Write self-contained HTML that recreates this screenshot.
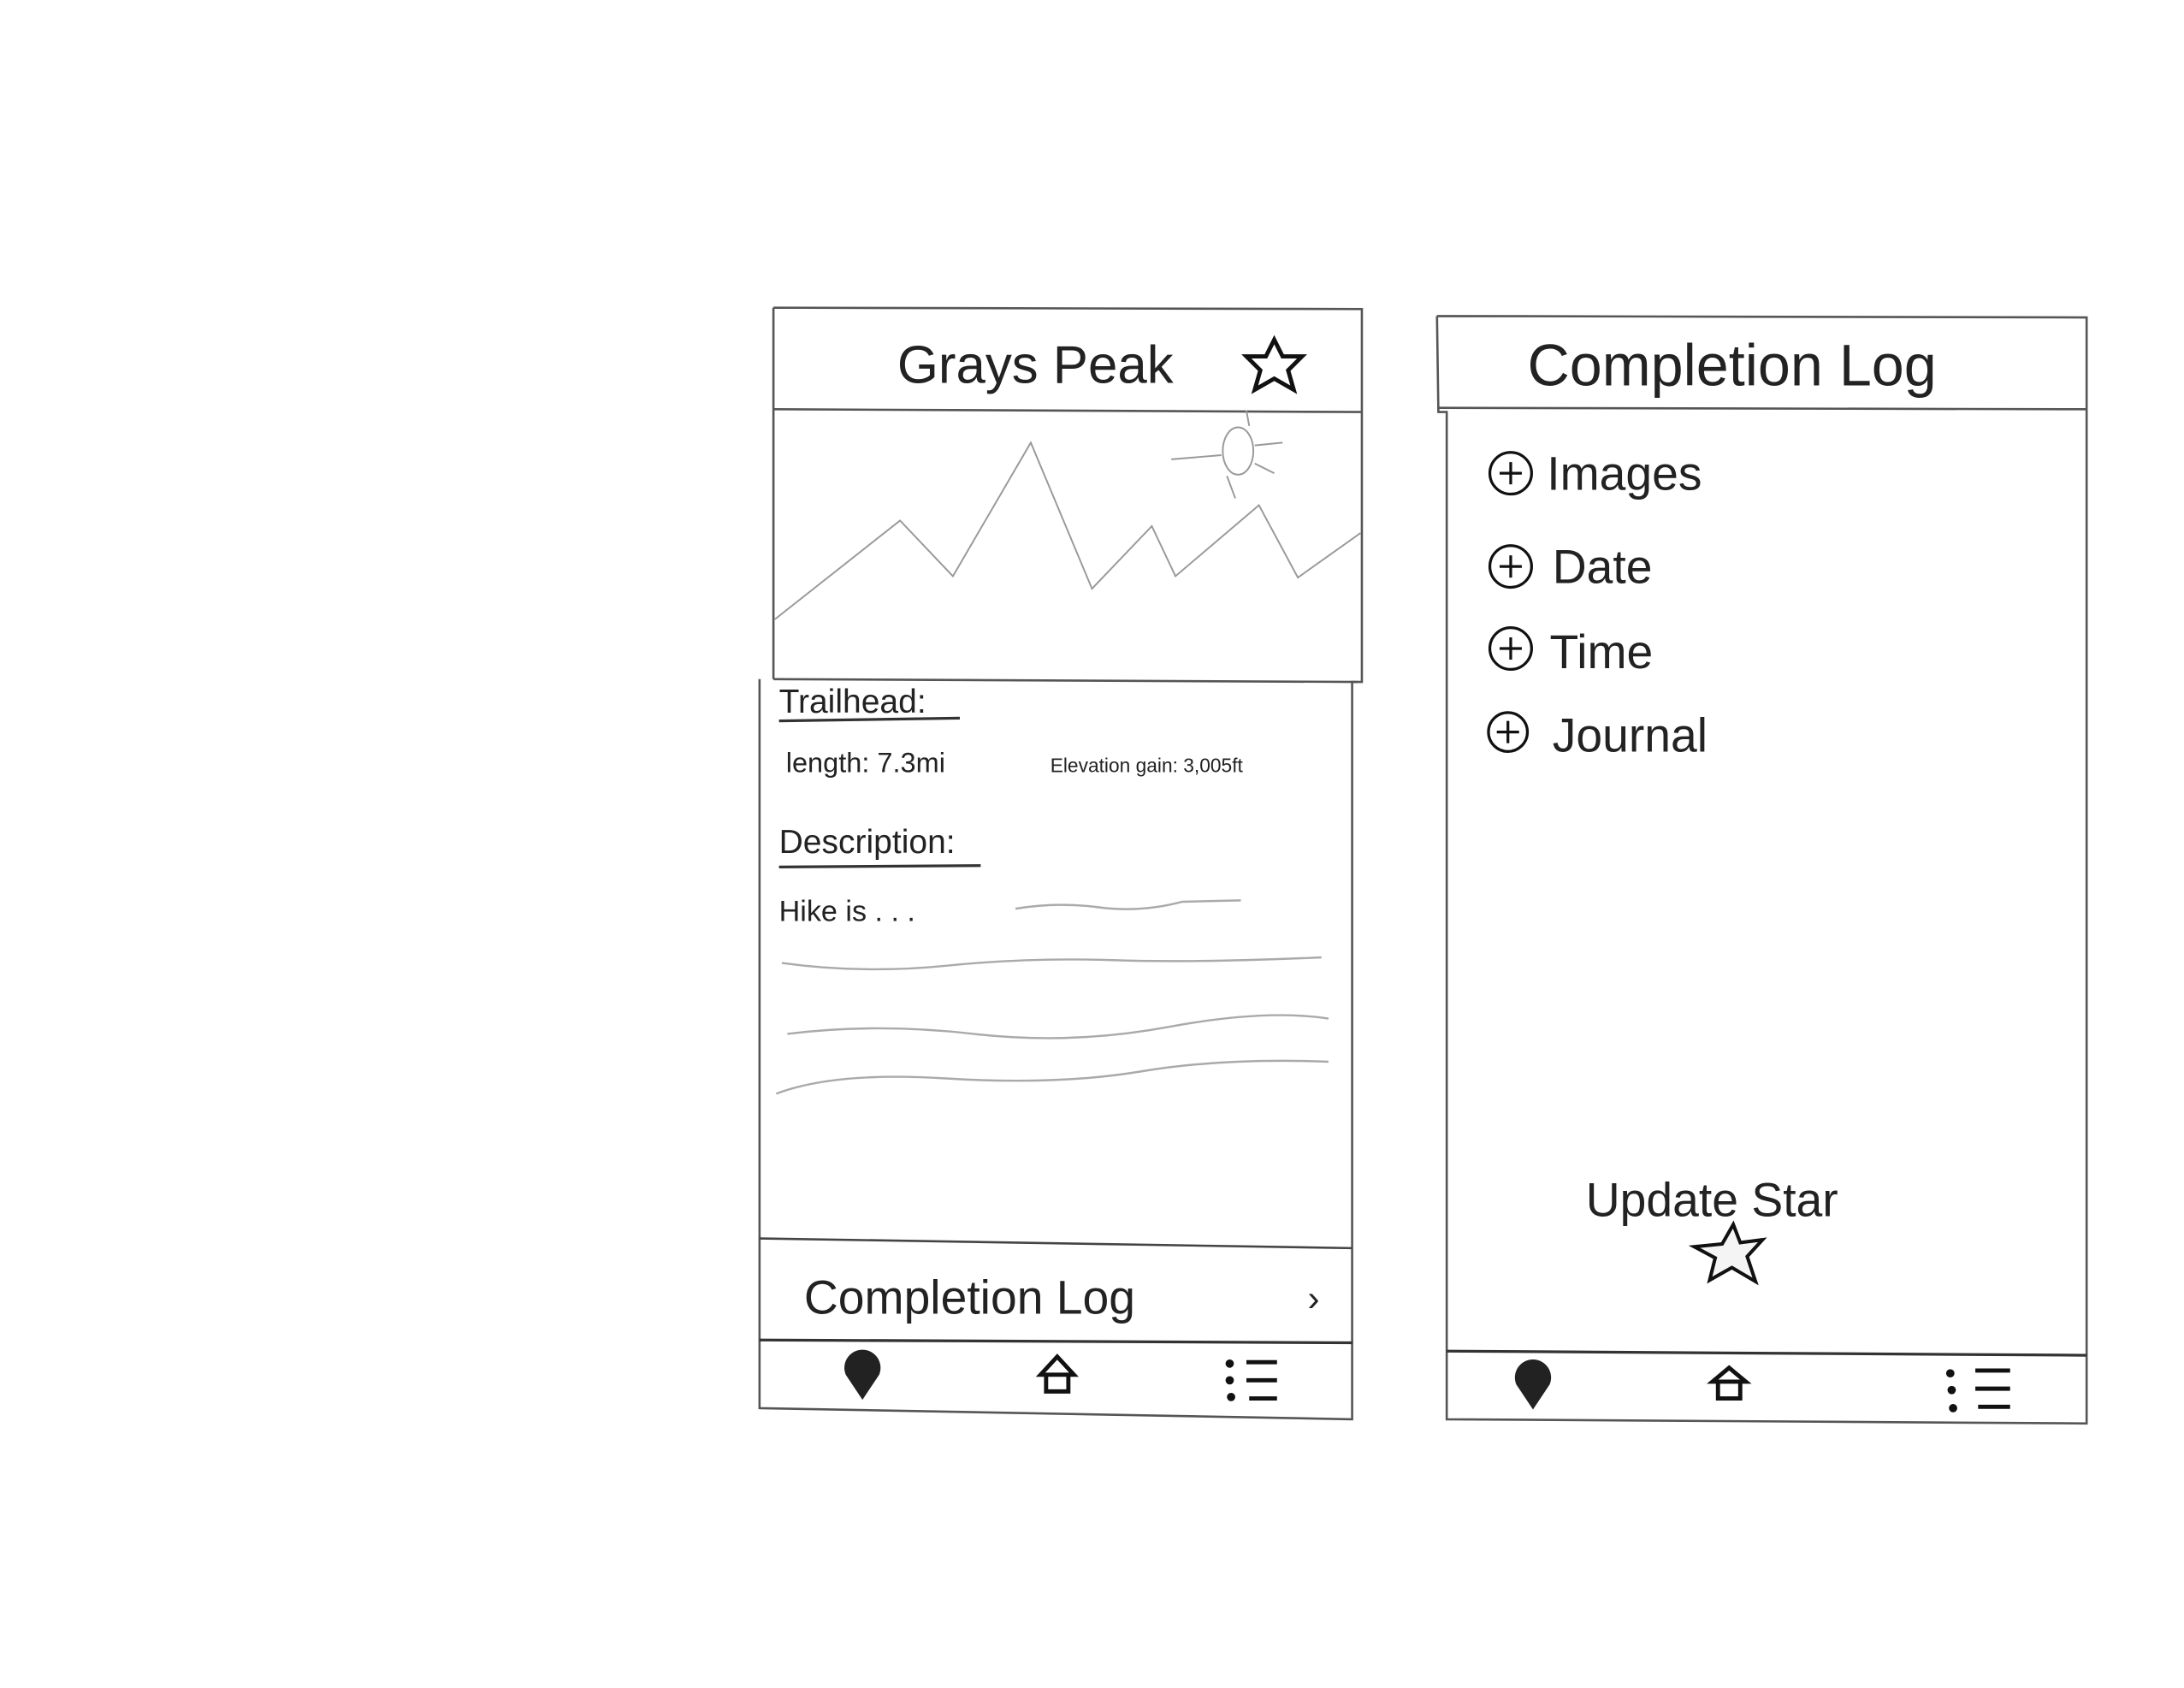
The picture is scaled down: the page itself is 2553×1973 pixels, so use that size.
<!DOCTYPE html>
<html><head><style>html,body{margin:0;padding:0;background:#fff}svg{display:block}</style></head>
<body>
<svg width="2553" height="1973" viewBox="0 0 1570 1213" xmlns="http://www.w3.org/2000/svg" font-family="Liberation Sans, sans-serif">
<g fill="none" stroke="#555" stroke-width="1.6">
<path d="M556 221 L979 222 L979 296 M556 221 L556 488 M546 488 L546 1012 L972 1020 L972 490 L979 490 L979 296"/>
<path d="M556 294 L979 296"/>
<path d="M556 488 L976 490"/>
<path d="M546 890 L972 897" stroke="#444"/>
<path d="M546 963 L972 965" stroke="#333" stroke-width="2"/>
<path d="M1033 227 L1500 228 L1500 1023 L1040 1020 L1040 296 L1034 296 L1033 227"/>
<path d="M1034 293 L1500 294"/>
<path d="M1040 971 L1500 974" stroke="#333" stroke-width="2"/>
</g>
<g fill="none" stroke="#999" stroke-width="1.2">
<polyline points="557,445 647,374 685,414 741,318 785,423 828,378 845,414 905,363 933,415 978,383"/>
<ellipse cx="890" cy="324" rx="11" ry="17"/>
<path d="M842 330 L878 327 M902 320 L922 318 M896 295 L898 306 M882 342 L888 358 M902 333 L916 340"/>
</g>
<g fill="#222">
<text x="645" y="275" font-size="38">Grays Peak</text>
<text x="560" y="512" font-size="24">Trailhead:</text>
<text x="565" y="555" font-size="20">length: 7.3mi</text>
<text x="755" y="555" font-size="14">Elevation gain: 3,005ft</text>
<text x="560" y="613" font-size="24">Description:</text>
<text x="560" y="662" font-size="21">Hike is . . .</text>
<text x="578" y="944" font-size="34">Completion Log</text>
<text x="940" y="942" font-size="26">›</text>
</g>
<path d="M560 518 L690 516 M560 623 L705 622" stroke="#333" stroke-width="2"/>
<g fill="none" stroke="#aaa" stroke-width="1.5">
<path d="M730 653 Q760 648 790 652 T850 648 L892 647"/>
<path d="M562 692 Q620 700 680 694 T800 690 T950 688"/>
<path d="M566 743 Q630 735 700 743 T840 738 T955 732"/>
<path d="M558 786 Q600 770 680 775 T820 770 T955 763"/>
</g>
<path d="M916 244 L922 256 L936 256 L926 266 L930 280 L916 272 L902 280 L906 266 L896 256 L910 256 Z" fill="#fff" stroke="#111" stroke-width="3"/>
<path d="M1246 880 L1251 893 L1267 891 L1256 903 L1262 921 L1245 911 L1229 920 L1233 904 L1218 896 L1238 894 Z" fill="#f4f4f4" stroke="#111" stroke-width="2.5"/>
<g fill="#222">
<text x="1098" y="277" font-size="42">Completion Log</text>
<text x="1112" y="352" font-size="34">Images</text>
<text x="1116" y="419" font-size="34">Date</text>
<text x="1114" y="480" font-size="34">Time</text>
<text x="1116" y="540" font-size="34">Journal</text>
<text x="1140" y="874" font-size="34">Update Star</text>
</g>
<g fill="none" stroke="#111" stroke-width="2">
<circle cx="1086" cy="340" r="15"/><path d="M1086 332 V348 M1078 340 H1094"/>
<circle cx="1086" cy="407" r="15"/><path d="M1086 399 V415 M1078 407 H1094"/>
<circle cx="1086" cy="466" r="15"/><path d="M1086 458 V474 M1078 466 H1094"/>
<circle cx="1084" cy="526" r="14"/><path d="M1084 518 V534 M1076 526 H1092"/>
</g>
<g>
<path d="M620 1006 L608 988 A13 13 0 1 1 632 988 Z" fill="#222"/>
<path d="M1102 1013 L1090 995 A13 13 0 1 1 1114 995 Z" fill="#222"/>
<g fill="none" stroke="#111" stroke-width="3">
<path d="M748 988 L760 975 L772 988 Z M752 988 V1000 H768 V988"/>
<path d="M1231 993 L1243 983 L1255 993 Z M1235 993 V1005 H1251 V993"/>
<path d="M896 979 H918 M896 992 H918 M898 1005 H918"/>
<path d="M1420 985 H1445 M1420 998 H1445 M1422 1011 H1445"/>
</g>
<g fill="#111">
<circle cx="884" cy="980" r="3"/><circle cx="884" cy="992" r="3"/><circle cx="885" cy="1004" r="3"/>
<circle cx="1402" cy="987" r="3"/><circle cx="1403" cy="999" r="3"/><circle cx="1404" cy="1012" r="3"/>
</g>
</g>
</svg>
</body></html>
